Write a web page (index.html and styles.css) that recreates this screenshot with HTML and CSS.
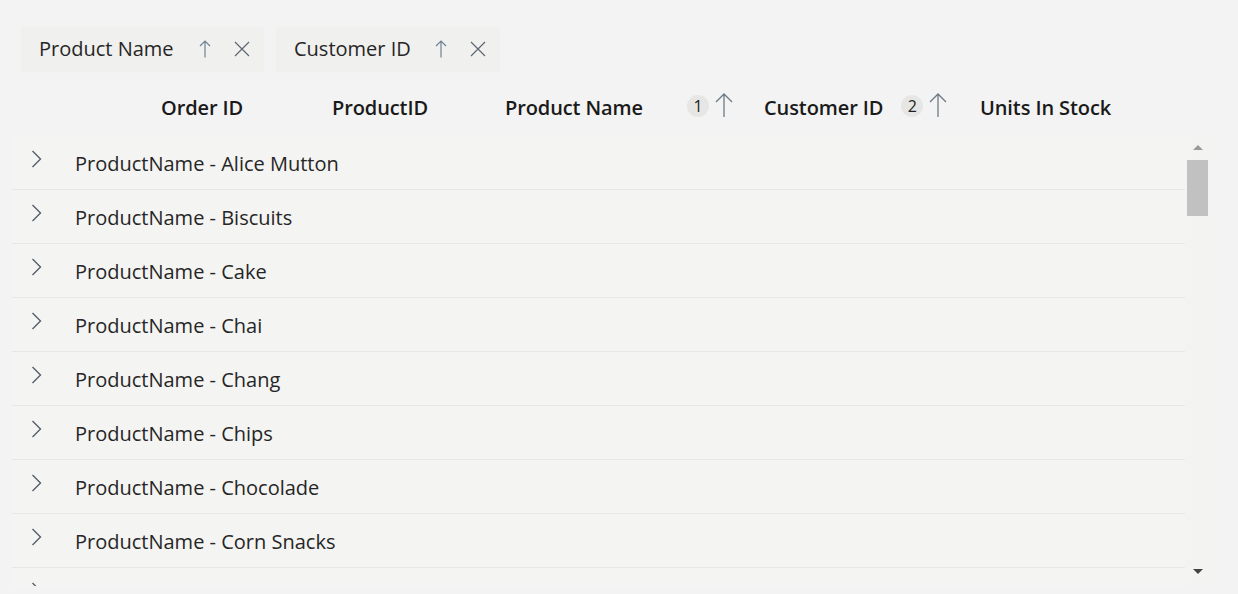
FILE: index.html
```html
<!DOCTYPE html>
<html>
<head>
<meta charset="utf-8">
<link rel="stylesheet" href="styles.css">
</head>
<body>
<div class="page">
  <div class="group-panel">
    <div class="chip chip1">
      <span class="chip-text">Product Name</span>
      <svg class="chip-arrow" width="12" height="18" viewBox="0 0 12 18"><path d="M6 17.5V1 M1 6 L6 1 L11 6" fill="none" stroke="#6f8394" stroke-width="1.2"/></svg>
      <svg class="chip-x" width="16" height="16" viewBox="0 0 16 16"><path d="M1 1 L15 15 M15 1 L1 15" fill="none" stroke="#5d6670" stroke-width="1.2"/></svg>
    </div>
    <div class="chip chip2">
      <span class="chip-text">Customer ID</span>
      <svg class="chip-arrow" width="12" height="18" viewBox="0 0 12 18"><path d="M6 17.5V1 M1 6 L6 1 L11 6" fill="none" stroke="#6f8394" stroke-width="1.2"/></svg>
      <svg class="chip-x" width="16" height="16" viewBox="0 0 16 16"><path d="M1 1 L15 15 M15 1 L1 15" fill="none" stroke="#5d6670" stroke-width="1.2"/></svg>
    </div>
  </div>

  <div class="header">
    <div class="hcell c-order">Order ID</div>
    <div class="hcell c-prodid">ProductID</div>
    <div class="hcell c-pname">Product Name<span class="badge b1">1</span><svg class="sort-arrow" width="20" height="26" viewBox="0 0 20 26"><path d="M10 25V2 M2 10 L10 2 L18 10" fill="none" stroke="#6d7a86" stroke-width="1.3"/></svg></div>
    <div class="hcell c-cust">Customer ID<span class="badge b2">2</span><svg class="sort-arrow" width="20" height="26" viewBox="0 0 20 26"><path d="M10 25V2 M2 10 L10 2 L18 10" fill="none" stroke="#6d7a86" stroke-width="1.3"/></svg></div>
    <div class="hcell c-units">Units In Stock</div>
  </div>

  <div class="grid">
    <div class="rows">
      <div class="row"><svg class="chev" width="11" height="18" viewBox="0 0 11 18"><path d="M1.5 1 L9.5 9 L1.5 17" fill="none" stroke="#4f5a66" stroke-width="1.3"/></svg><span class="rtext">ProductName - Alice Mutton</span></div>
      <div class="row"><svg class="chev" width="11" height="18" viewBox="0 0 11 18"><path d="M1.5 1 L9.5 9 L1.5 17" fill="none" stroke="#4f5a66" stroke-width="1.3"/></svg><span class="rtext">ProductName - Biscuits</span></div>
      <div class="row"><svg class="chev" width="11" height="18" viewBox="0 0 11 18"><path d="M1.5 1 L9.5 9 L1.5 17" fill="none" stroke="#4f5a66" stroke-width="1.3"/></svg><span class="rtext">ProductName - Cake</span></div>
      <div class="row"><svg class="chev" width="11" height="18" viewBox="0 0 11 18"><path d="M1.5 1 L9.5 9 L1.5 17" fill="none" stroke="#4f5a66" stroke-width="1.3"/></svg><span class="rtext">ProductName - Chai</span></div>
      <div class="row"><svg class="chev" width="11" height="18" viewBox="0 0 11 18"><path d="M1.5 1 L9.5 9 L1.5 17" fill="none" stroke="#4f5a66" stroke-width="1.3"/></svg><span class="rtext">ProductName - Chang</span></div>
      <div class="row"><svg class="chev" width="11" height="18" viewBox="0 0 11 18"><path d="M1.5 1 L9.5 9 L1.5 17" fill="none" stroke="#4f5a66" stroke-width="1.3"/></svg><span class="rtext">ProductName - Chips</span></div>
      <div class="row"><svg class="chev" width="11" height="18" viewBox="0 0 11 18"><path d="M1.5 1 L9.5 9 L1.5 17" fill="none" stroke="#4f5a66" stroke-width="1.3"/></svg><span class="rtext">ProductName - Chocolade</span></div>
      <div class="row"><svg class="chev" width="11" height="18" viewBox="0 0 11 18"><path d="M1.5 1 L9.5 9 L1.5 17" fill="none" stroke="#4f5a66" stroke-width="1.3"/></svg><span class="rtext">ProductName - Corn Snacks</span></div>
      <div class="row"><svg class="chev" width="11" height="18" viewBox="0 0 11 18"><path d="M1.5 1 L9.5 9 L1.5 17" fill="none" stroke="#4f5a66" stroke-width="1.3"/></svg></div>
    </div>
    <div class="scrollbar">
      <div class="sb-up"></div>
      <div class="sb-thumb"></div>
      <div class="sb-track"></div>
      <div class="sb-down"></div>
    </div>
  </div>
</div>
</body>
</html>
```
FILE: styles.css
```css
html, body {
  margin: 0;
  padding: 0;
  background: #f3f3f3;
  overflow: hidden;
}
body {
  font-family: "Open Sans", "Noto Sans", sans-serif;
  color: #1f1f1f;
  width: 1238px;
  height: 594px;
}
.page {
  padding-top: 27px;
}
.group-panel {
  display: flex;
  gap: 12px;
  margin-left: 21px;
  height: 45px;
}
.chip {
  display: flex;
  align-items: center;
  background: #f0f0ee;
  height: 45px;
  padding-left: 18px;
  box-sizing: border-box;
}
.chip1 { width: 243px; }
.chip2 { width: 224px; }
.chip-text {
  font-size: 20px;
  color: #262626;
  margin-top: -3px;
}
.chip-arrow {
  margin-left: 25px;
  margin-top: -2px;
}
.chip-x {
  margin-left: 23px;
  margin-top: -2px;
}
.chip2 .chip-arrow {
  margin-left: 24px;
}
.header {
  display: flex;
  align-items: center;
  height: 38px;
  margin-top: 16px;
  padding-left: 161px;
  font-weight: 600;
  font-size: 20px;
  letter-spacing: -0.1px;
  color: #1a1a1a;
}
.hcell {
  display: flex;
  align-items: center;
  white-space: nowrap;
}
.c-order { width: 171px; }
.c-prodid { width: 173px; }
.c-pname { width: 259px; }
.c-cust { width: 216px; }
.badge {
  display: inline-flex;
  align-items: center;
  justify-content: center;
  width: 22px;
  height: 22px;
  border-radius: 50%;
  background: #e6e6e4;
  font-size: 16px;
  font-weight: 400;
  color: #222;
  margin-top: -3px;
}
.b1 { margin-left: 44px; }
.b2 { margin-left: 18px; }
.sort-arrow {
  margin-left: 5px;
  margin-top: -4px;
}
.grid {
  display: flex;
  margin-top: 10px;
  margin-left: 12px;
  width: 1198px;
  height: 450px;
  background: #f4f4f2;
  overflow: hidden;
}
.rows {
  flex: 1;
  overflow: hidden;
}
.row {
  display: flex;
  align-items: center;
  height: 53px;
  border-bottom: 1px solid #e7e7e5;
}
.chev {
  margin-left: 19px;
  margin-top: -8px;
}
.rtext {
  margin-left: 33px;
  margin-top: 2px;
  font-size: 20px;
  color: #262626;
}
.scrollbar {
  width: 25px;
  display: flex;
  flex-direction: column;
  align-items: center;
  background: #f3f3f1;
}
.sb-up {
  margin-top: 9px;
  width: 0;
  height: 0;
  border-left: 5px solid transparent;
  border-right: 5px solid transparent;
  border-bottom: 5px solid #9a9a9a;
}
.sb-thumb {
  margin-top: 10px;
  width: 21px;
  height: 56px;
  background: #c1c1c1;
}
.sb-track {
  flex: 1;
}
.sb-down {
  margin-bottom: 12px;
  width: 0;
  height: 0;
  border-left: 5px solid transparent;
  border-right: 5px solid transparent;
  border-top: 5px solid #444;
}
```
